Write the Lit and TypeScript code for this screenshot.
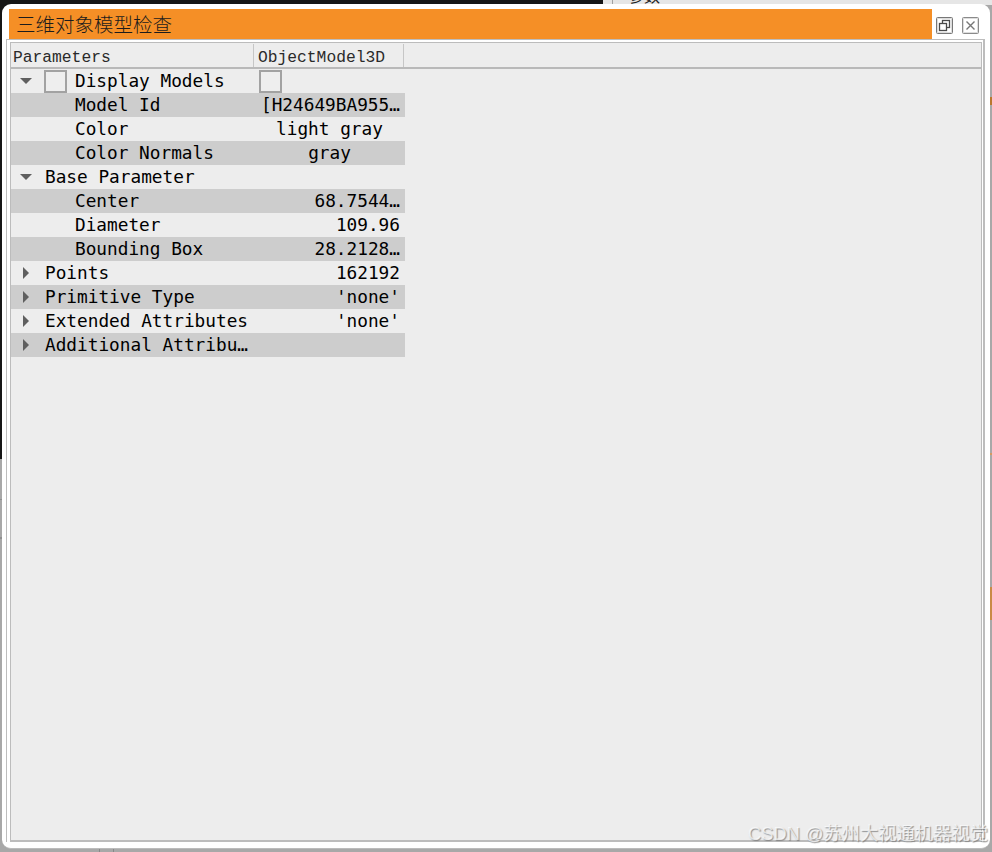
import { LitElement, html, css, svg } from "lit";
import { customElement } from "lit/decorators.js";

type Row = { label: string; value?: string; depth: 0 | 1; arrow?: "down" | "right"; align?: "center" | "right" | "left"; check?: boolean; };

const rows: Row[] = [
  { label: "Display Models", depth: 0, arrow: "down", check: true },
  { label: "Model Id", value: "[H24649BA955…", depth: 1, align: "left" },
  { label: "Color", value: "light gray", depth: 1, align: "center" },
  { label: "Color Normals", value: "gray", depth: 1, align: "center" },
  { label: "Base Parameter", depth: 0, arrow: "down" },
  { label: "Center", value: "68.7544…", depth: 1, align: "right" },
  { label: "Diameter", value: "109.96", depth: 1, align: "right" },
  { label: "Bounding Box", value: "28.2128…", depth: 1, align: "right" },
  { label: "Points", value: "162192", depth: 0, arrow: "right", align: "right" },
  { label: "Primitive Type", value: "'none'", depth: 0, arrow: "right", align: "right" },
  { label: "Extended Attributes", value: "'none'", depth: 0, arrow: "right", align: "right" },
  { label: "Additional Attribu…", depth: 0, arrow: "right" },
];

@customElement("app-root")
export class AppRoot extends LitElement {
  static styles = css`
    :host { display: block; width: 992px; height: 852px; position: relative; overflow: hidden; background: #a8a8a8; font-family: "DejaVu Sans Mono", monospace; }
    .dark { position: absolute; left: 0; top: 0; width: 603px; height: 459px; background: #161616; }
    .topline { position: absolute; left: 603px; top: 0; width: 389px; height: 5px; overflow: hidden; box-sizing: border-box; background: #e6e6e6; }
    .topline::before { content: ""; position: absolute; left: 9px; top: 0; width: 1px; height: 5px; background: #a0a0a0; }
    .peek { position: absolute; left: 25px; top: -13px; font: 16px/16px "Noto Sans CJK SC", sans-serif; color: #222; }
    .edge-r { position: absolute; left: 990px; top: 0; width: 2px; height: 852px; background:
      linear-gradient(#b9772e, #b9772e) 0 97px / 2px 8px no-repeat,
      linear-gradient(#c98a45, #c98a45) 0 587px / 2px 33px no-repeat,
      linear-gradient(#d29a62, #d29a62) 0 453px / 2px 2px no-repeat; }
    .edge-l { position: absolute; left: 0; top: 459px; width: 2px; height: 393px; background:
      linear-gradient(#8f8f8f, #8f8f8f) 0 40px / 2px 1px no-repeat,
      linear-gradient(#8f8f8f, #8f8f8f) 0 78px / 2px 2px no-repeat; }
    .edge-b { position: absolute; left: 0; top: 849px; width: 992px; height: 3px; background:
      linear-gradient(#888, #888) 99px 0 / 1px 3px no-repeat,
      linear-gradient(#888, #888) 113px 0 / 1px 3px no-repeat; }
    .win { position: absolute; left: 2px; top: 4px; width: 988px; height: 845px; box-sizing: border-box; background: #fff; border-radius: 9px; padding: 5px 5px 6px 4px; display: flex; flex-direction: column; border-bottom: 1px solid #bbb; }
    .titlerow { display: flex; height: 30px; flex: none; padding-left: 3px; }
    .title { width: 923px; height: 30px; background: #f58f26; color: #1c1c1c; font: 19.5px/29px "Noto Sans CJK SC", sans-serif; font-weight: 300; padding-left: 7px; box-sizing: border-box; white-space: nowrap; }
    .btns { display: flex; gap: 9px; padding: 8px 0 0 4px; }
    .btns svg { width: 17px; height: 17px; display: block; }
    .frame { flex: 1; border: 1px solid #bdbdbd; border-right-width: 2px; border-bottom-width: 0; padding: 2px 1px 0 3px; display: flex; flex-direction: column; background: #fff; }
    .panel { flex: 1; background: #ededed; border: 1px solid #bcbcbc; border-width: 1px 1px 2px 1px; box-sizing: border-box; padding-top: 1px; }
    .head { display: flex; height: 23px; border-bottom: 2px solid #b9b9b9; font: 16.3px/27px "Liberation Mono", monospace; color: #2a2a2a; }
    .hc { box-sizing: border-box; padding-left: 2px; border-right: 1px solid #c6c6c6; white-space: nowrap; }
    .hc.a { width: 243px; }
    .hc.b { width: 150px; padding-left: 4px; }
    .row { display: flex; height: 24px; width: 394px; font-size: 17.75px; line-height: 24px; color: #000; white-space: pre; }
    .row.alt { background: #cdcdcd; }
    .k { width: 243px; display: flex; align-items: center; flex: none; box-sizing: border-box; }
    .tw { width: 34px; flex: none; display: flex; align-items: center; padding-left: 8px; box-sizing: border-box; }
    .tw svg { display: block; }
    .tw.deep { width: 64px; }
    .cb { width: 23px; height: 23px; box-sizing: border-box; border: 2px solid #a2a2a2; background: #eee; flex: none; }
    .k .cb { margin: 0 8px 0 -1px; }
    .v { flex: 1; box-sizing: border-box; padding: 0 5px; }
    .v.left { padding-left: 7px; text-align: left; }
    .v.center { text-align: center; padding-right: 5px; }
    .v.right { text-align: right; }
    .v .cb { margin: 1px 0 0 0; }
    .mark { position: absolute; right: 4px; top: 823px; font: 18.3px/22px "Liberation Sans", "Noto Sans CJK SC", sans-serif; color: rgba(255,255,255,.7); text-shadow: 1px 1px 1px rgba(110,110,110,.7); white-space: nowrap; }
  `;

  private arrow(kind?: "down" | "right") {
    if (kind === "down") return svg`<svg width="14" height="8" viewBox="0 0 14 8"><path d="M1 1h12L7 7z" fill="#5f5f5f"/></svg>`;
    return svg`<svg width="14" height="14" viewBox="0 0 14 14"><path d="M4 1l6 6-6 6z" fill="#5f5f5f"/></svg>`;
  }

  render() {
    return html`
      <div class="dark"></div>
      <div class="edge-l"></div>
      <div class="edge-r"></div>
      <div class="edge-b"></div>
      <div class="topline"><span class="peek">参数</span></div>
      <div class="win">
        <div class="titlerow">
          <div class="title">三维对象模型检查</div>
          <div class="btns">
            <svg viewBox="0 0 17 17" fill="none" stroke="#4a4a4a"><rect x=".5" y=".5" width="16" height="16" rx="1" stroke="#777" /><rect x="1.5" y="1.5" width="14" height="14" stroke="#ddd"/><rect x="6.5" y="3.5" width="7" height="7" stroke-width="1.3"/><rect x="3.5" y="6.5" width="7" height="7" fill="#fff" stroke-width="1.3"/></svg>
            <svg viewBox="0 0 17 17" fill="none" stroke="#777"><rect x=".5" y=".5" width="16" height="16" rx="1" stroke="#8a8a8a"/><rect x="1.5" y="1.5" width="14" height="14" stroke="#ddd"/><path d="M4.5 4.5l8 8M12.5 4.5l-8 8" stroke-width="1.4"/></svg>
          </div>
        </div>
        <div class="frame">
          <div class="panel">
            <div class="head"><div class="hc a">Parameters</div><div class="hc b">ObjectModel3D</div></div>
            ${rows.map((r, i) => html`
              <div class="row ${i % 2 ? "alt" : ""}">
                <div class="k">
                  ${r.depth === 1
                    ? html`<div class="tw deep"></div>`
                    : html`<div class="tw">${this.arrow(r.arrow)}</div>`}
                  ${r.check ? html`<div class="cb"></div>` : ""}
                  <span>${r.label}</span>
                </div>
                <div class="v ${r.align ?? ""}">${r.check ? html`<div class="cb"></div>` : r.value ?? ""}</div>
              </div>`)}
          </div>
        </div>
      </div>
      <div class="mark">CSDN @苏州大视通机器视觉</div>
    `;
  }
}
